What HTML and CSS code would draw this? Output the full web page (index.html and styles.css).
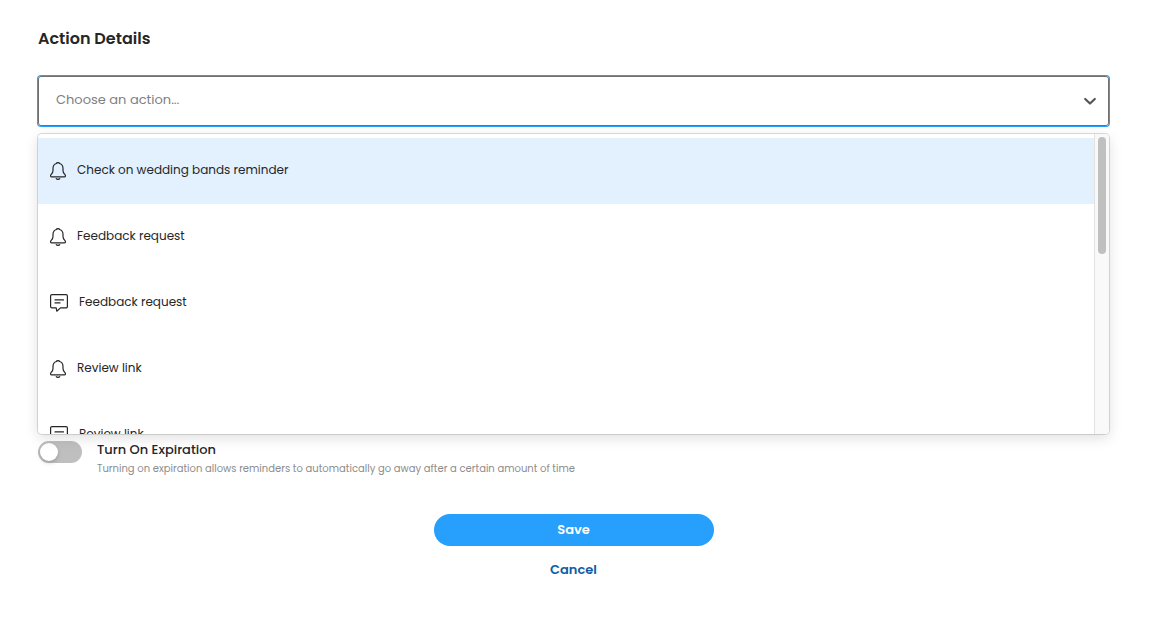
FILE: index.html
```html
<!DOCTYPE html>
<html lang="en">
<head>
    <meta charset="UTF-8">
    <meta name="viewport" content="width=device-width, initial-scale=1.0">
    <title>Action Details</title>
    <link rel="stylesheet" href="styles.css">
</head>
<body>
    <!-- shared icons -->
    <svg class="sprite" aria-hidden="true">
        <symbol id="bell" viewBox="0 0 16 18">
            <path d="M6.400 1.500C6.700.300 9.300.300 9.600 1.500C11.900 2.200 13 4 13 6.400V8.400C13 10.100 13.600 11.200 14.800 12.400C15.900 13.600 15.500 14.900 14.300 14.900H1.700C.500 14.900.100 13.600 1.200 12.400C2.400 11.200 3 10.100 3 8.400V6.400C3 4 4.100 2.200 6.400 1.500z"/>
            <path d="M6.200 16.700C6.900 17.600 9.100 17.600 9.800 16.700"/>
        </symbol>
        <symbol id="message" viewBox="0 0 18 18">
            <path d="M2 .6h14a1.400 1.400 0 0 1 1.400 1.400v10.500a1.400 1.400 0 0 1-1.400 1.400h-5.500L6.800 17.200l-.6-3.300H2A1.400 1.400 0 0 1 .6 12.500V2A1.400 1.400 0 0 1 2 .6z"/>
            <path d="M5 5.900h8.500M5 8.900h5"/>
        </symbol>
    </svg>

    <form class="action-form">
        <h1 class="title"><label for="action">Action Details</label></h1>

        <div class="select">
            <div class="control">
                <input class="control-input" id="action" type="text" role="combobox" aria-expanded="true" aria-controls="action-list" placeholder="Choose an action..." autocomplete="off">
                <button class="btn-toggle" type="button" aria-label="Toggle list">
                    <svg class="chevron" viewBox="0 0 20 20"><path d="M5.200 8L10 12.500l4.800-4.500"/></svg>
                </button>
            </div>
            <div class="menu">
                <ul class="options" id="action-list" role="listbox" aria-label="Actions">
                    <li class="option active" role="option" aria-selected="true">
                        <svg class="icon icon-bell"><use href="#bell"/></svg>
                        <span>Check on wedding bands reminder</span>
                    </li>
                    <li class="option" role="option">
                        <svg class="icon icon-bell"><use href="#bell"/></svg>
                        <span>Feedback request</span>
                    </li>
                    <li class="option" role="option">
                        <svg class="icon icon-message"><use href="#message"/></svg>
                        <span>Feedback request</span>
                    </li>
                    <li class="option" role="option">
                        <svg class="icon icon-bell"><use href="#bell"/></svg>
                        <span>Review link</span>
                    </li>
                    <li class="option" role="option">
                        <svg class="icon icon-message"><use href="#message"/></svg>
                        <span>Review link</span>
                    </li>
                </ul>
                <div class="scroll-track"><div class="scroll-thumb"></div></div>
            </div>
        </div>

        <div class="expiration">
            <input class="switch" id="expiration" type="checkbox" role="switch" aria-describedby="expiration-help">
            <div class="expiration-text">
                <label class="expiration-label" for="expiration">Turn On Expiration</label>
                <p class="help" id="expiration-help">Turning on expiration allows reminders to automatically go away after a certain amount of time</p>
            </div>
        </div>

        <div class="actions">
            <button class="btn btn-save" type="submit">Save</button>
            <button class="btn btn-cancel" type="button">Cancel</button>
        </div>
    </form>
</body>
</html>
```
FILE: styles.css
```css
*{
    box-sizing: border-box;
    padding: 0;
    margin: 0;
}
body{
    background-color: white;
    color: #262626;
    font-family: Poppins, Inter, sans-serif;
}
button,
input{
    font-family: inherit;
}
.sprite{
    display: none;
}
.action-form{
    padding: 27px 40px 40px 38px;
}
.title{
    font-size: 16px;
    line-height: 24px;
    font-weight: 600;
}
.select{
    position: relative;
    margin-top: 25px;
}
.control{
    display: flex;
    align-items: center;
    height: 50px;
    padding-right: 8px;
    border: 1px solid #707070;
    border-radius: 3px;
    box-shadow: 0 0 0 1px #26a0fc;
}
.control-input{
    flex: 1;
    min-width: 0;
    height: 100%;
    padding: 0 17px 2px;
    border: 0;
    outline: 0;
    background: none;
    font-size: 13px;
}
.control-input::placeholder{
    color: #808080;
}
.btn-toggle{
    display: flex;
    border: 0;
    background: none;
}
.chevron{
    width: 20px;
    height: 20px;
    fill: none;
    stroke: #555;
    stroke-width: 2.2;
    stroke-linecap: round;
    stroke-linejoin: round;
}
/* the open list covers what follows the control */
.menu{
    position: absolute;
    top: 100%;
    left: 0;
    right: 0;
    display: flex;
    height: 300px;
    margin-top: 8px;
    overflow: hidden;
    border-radius: 4px;
    background-color: white;
    box-shadow: 0 0 0 1px rgba(0, 0, 0, .13), 0 4px 14px rgba(0, 0, 0, .13);
}
.options{
    flex: 1;
    padding: 4px 0;
    overflow-y: auto;
    scrollbar-width: none;
    list-style: none;
}
.option{
    display: flex;
    align-items: center;
    gap: 11px;
    height: 66px;
    padding: 0 12px;
    font-size: 12px;
    line-height: 18px;
}
.option span{
    padding-bottom: 2px;
}
.option.active{
    background-color: #e3f1ff;
}
.icon{
    height: 18px;
    fill: none;
    stroke: #262626;
    stroke-width: 1.2;
    stroke-linecap: round;
    stroke-linejoin: round;
}
.icon-bell{
    width: 16px;
}
.icon-message{
    width: 18px;
}
.scroll-track{
    width: 15px;
    padding: 3px;
    border-left: 1px solid #e2e2e2;
    background-color: #f9f9f9;
}
.scroll-thumb{
    width: 8px;
    height: 117px;
    border-radius: 4px;
    background-color: #c0c0c0;
}
.expiration{
    display: flex;
    gap: 15px;
    margin-top: 314px;
}
.switch{
    appearance: none;
    flex: none;
    width: 44px;
    height: 22px;
    margin-top: 1px;
    padding: 2px;
    border-radius: 11px;
    background-color: #bfbfbf;
}
.switch::before{
    content: "";
    display: block;
    width: 18px;
    height: 18px;
    border-radius: 50%;
    background-color: white;
    box-shadow: 0 2px 4px rgba(0, 35, 11, .2);
}
.switch:checked{
    background-color: #26a0fc;
}
.switch:checked::before{
    margin-left: auto;
}
.expiration-label{
    display: block;
    font-size: 13px;
    line-height: 20px;
    font-weight: 500;
}
.help{
    color: #8c8c8c;
    font-size: 10px;
    line-height: 18px;
}
.actions{
    display: flex;
    flex-direction: column;
    align-items: center;
    gap: 8px;
    margin-top: 36px;
}
.btn{
    width: 280px;
    max-width: 100%;
    height: 32px;
    padding-bottom: 1px;
    border: 0;
    border-radius: 16px;
    font-size: 13px;
    font-weight: 600;
}
.btn-save{
    color: white;
    background-color: #26a0fc;
}
.btn-cancel{
    color: #105ba5;
    background: none;
}
```
